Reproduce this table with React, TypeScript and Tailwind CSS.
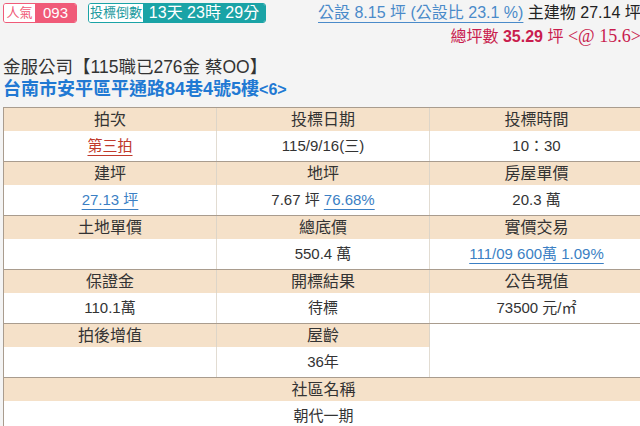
import React, { FC } from "react";

const font = "font-['Liberation_Sans','Noto_Sans_CJK_TC',sans-serif]";

type Cell = { label: string; value?: React.ReactNode };

const Head: FC<{ children?: React.ReactNode; last?: boolean }> = ({ children, last }) => (
  <div
    className={`h-[23px] bg-[#f5e1c9] flex items-center justify-center text-[16px] leading-[23px] text-[#333] ${
      last ? "" : "border-r border-[#ddd5c8]"
    }`}
  >
    {children}
  </div>
);

const Val: FC<{ children?: React.ReactNode; last?: boolean }> = ({ children, last }) => (
  <div
    className={`h-[30px] bg-white flex items-center justify-center text-[15px] leading-[30px] text-[#333] ${
      last ? "" : "border-r border-[#e2dcd2]"
    }`}
  >
    {children}
  </div>
);

const Group: FC<{ cells: Cell[] }> = ({ cells }) => (
  <div className="grid grid-cols-3 border-t border-[#a99c8e]">
    {cells.map((c, i) => (
      <div key={i} className="flex flex-col">
        {c.label ? (
          <>
            <Head last={i === 2}>{c.label}</Head>
            <Val last={i === 2}>{c.value}</Val>
          </>
        ) : (
          <div className="h-[53px] bg-white" />
        )}
      </div>
    ))}
  </div>
);

const blueLink = "text-[#3b7fc4] underline decoration-[#3b7fc4] underline-offset-[4px]";

const App: FC = () => {
  return (
    <div className={`w-[640px] h-[426px] overflow-hidden bg-[#f4f4f4] ${font}`}>
      {/* 上方標籤列 */}
      <div className="h-[56px] flex items-start pt-[3px] pl-[3px]">
        <div className="flex shrink-0 h-[20px] rounded-[3px] overflow-hidden border border-[#f05a78]">
          <span className="w-[31px] bg-white text-[#f05a78] text-[13px] leading-[18px] text-center">人氣</span>
          <span className="w-[41px] bg-[#f05a78] text-white text-[15px] leading-[18px] text-center">093</span>
        </div>
        <div className="flex shrink-0 ml-[11px] h-[20px] rounded-[3px] overflow-hidden border border-[#1aa3a6]">
          <span className="w-[54px] bg-white text-[#1a9a9e] text-[13px] leading-[18px] text-center">投標倒數</span>
          <span className="w-[122px] bg-[#1aa3a6] text-white text-[16px] leading-[18px] text-center">
            13天 23時 29分
          </span>
        </div>
        <div className="flex flex-col items-end shrink-0 ml-[52px] -mt-[1px] whitespace-nowrap">
          <div className="text-[16px] leading-[22px]">
            <span className="text-[#4a8ac9] underline decoration-[#4a8ac9] underline-offset-[4px]">
              公設 8.15 坪 (公設比 23.1 %)
            </span>
            <span className="text-[#222]"> 主建物 27.14 坪</span>
          </div>
          <div className="text-[16px] leading-[22px] mt-[1px] text-[#c91d4e]">
            總坪數 <b>35.29</b> 坪{" "}
            <span className="font-['Liberation_Serif',serif] text-[18px]">&lt;@ 15.6&gt;</span>
          </div>
        </div>
      </div>

      {/* 標題 */}
      <div className="pl-[3px] text-[17.5px] leading-[22px] text-[#333] whitespace-nowrap">
        金服公司【115職已276金 蔡OO】
      </div>
      <div className="pl-[3px] text-[18px] leading-[22px] font-bold text-[#2179d3] whitespace-nowrap">
        台南市安平區平通路84巷4號5樓<span className="text-[16px]">&lt;6&gt;</span>
      </div>

      {/* 資料表 */}
      <div className="mt-[6px] ml-[3px] w-[640px] border-l border-[#a99c8e]">
        <Group
          cells={[
            {
              label: "拍次",
              value: (
                <span className="text-[#c0392b] underline decoration-[#c0392b] underline-offset-[4px]">第三拍</span>
              ),
            },
            { label: "投標日期", value: "115/9/16(三)" },
            { label: "投標時間", value: "10：30" },
          ]}
        />
        <Group
          cells={[
            { label: "建坪", value: <span className={blueLink}>27.13 坪</span> },
            {
              label: "地坪",
              value: (
                <span>
                  7.67 坪 <span className={blueLink}>76.68%</span>
                </span>
              ),
            },
            { label: "房屋單價", value: "20.3 萬" },
          ]}
        />
        <Group
          cells={[
            { label: "土地單價", value: "" },
            { label: "總底價", value: "550.4 萬" },
            { label: "實價交易", value: <span className={blueLink}>111/09 600萬 1.09%</span> },
          ]}
        />
        <Group
          cells={[
            { label: "保證金", value: "110.1萬" },
            { label: "開標結果", value: "待標" },
            { label: "公告現值", value: "73500 元/㎡" },
          ]}
        />
        <Group
          cells={[
            { label: "拍後增值", value: "" },
            { label: "屋齡", value: "36年" },
            { label: "" },
          ]}
        />
        <div className="border-t border-[#a99c8e]">
          <Head last>社區名稱</Head>
          <Val last>朝代一期</Val>
        </div>
      </div>
    </div>
  );
};

export default App;
